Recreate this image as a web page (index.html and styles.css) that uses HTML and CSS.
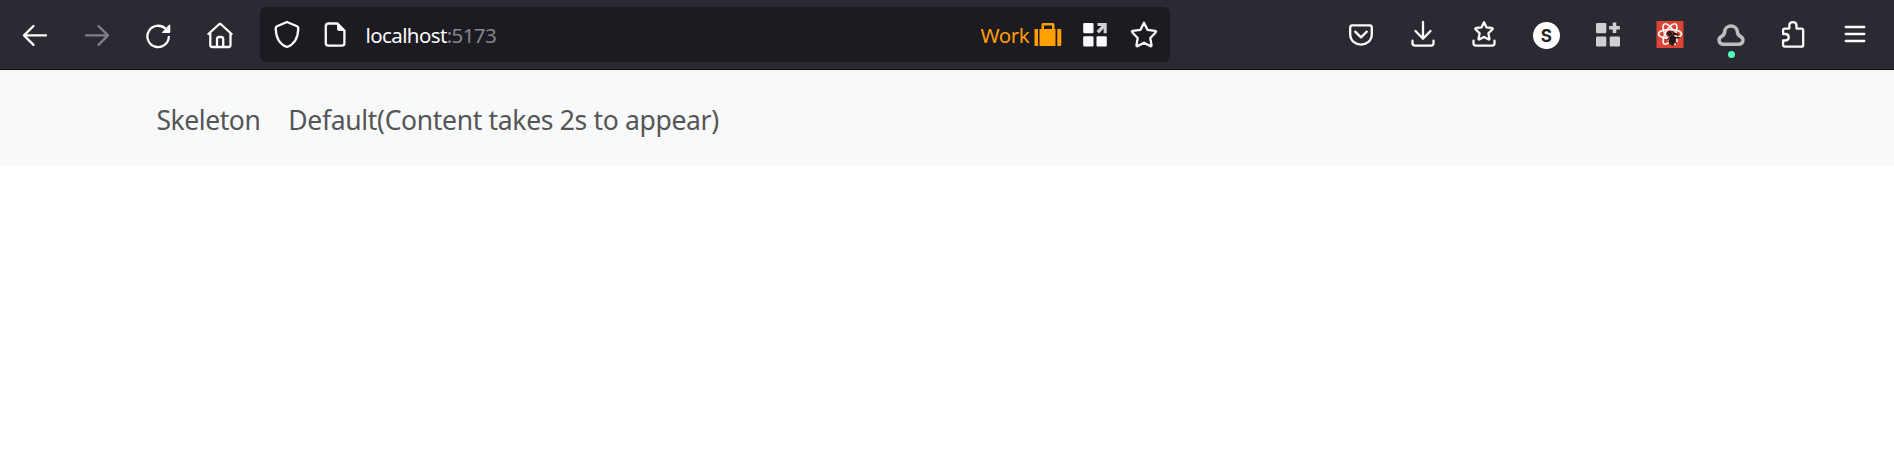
FILE: index.html
```html
<!DOCTYPE html>
<html lang="en">
<head>
<meta charset="utf-8">
<title>localhost:5173</title>
<link rel="stylesheet" href="styles.css">
</head>
<body>
<header class="toolbar">
  <div class="nav-buttons">
    <span class="tool"><svg class="icon" viewBox="-16 -16 32 32"><path d="M11 .4H-11M-1.500-9-11 .4l9.500 9.500"/></svg></span>
    <span class="tool dim"><svg class="icon" viewBox="-16 -16 32 32"><path d="M-11 .4H11M1.500-9 11 .4l-9.500 9.500"/></svg></span>
    <span class="tool"><svg class="icon" viewBox="-16 -16 32 32"><path d="M10.800 2A10.700 10.700 0 1 1 7.500-6.300"/><path class="solid" d="M12.300-9.500v6.600q0 1-1 1H4.800q-1.500 0-.5-1.100l6.600-7q1.400-1 1.400.5z"/></svg></span>
    <span class="tool"><svg class="icon" viewBox="-16 -16 32 32"><path d="M-11.600-1-1.200-10.500q1.200-1 2.400 0L11.600-1M-9.700-2V10q0 2 2 2H8.500q2 0 2-2V-2M-3 12V4q0-2 2-2H1.200q2 0 2 2v8"/></svg></span>
  </div>
  <div class="urlbar">
    <svg class="icon shield" viewBox="-16 -16 32 32"><path d="M0-13 10-8.700q1.400.7 1.300 2.200C11 2 8 9.300 0 12-8 9.300-11 2-11.300-6.500q-.1-1.500 1.300-2.200z"/></svg>
    <svg class="icon page" viewBox="-16 -16 32 32"><path d="M2.500-11.500h-9q-2.700 0-2.700 2.700V8q0 2.700 2.700 2.700H6.800Q9.400 10.700 9.400 8V-4.500z"/><path class="solid" d="M2-12v5.500Q2-4 4.500-4H10z"/></svg>
    <span class="address">localhost<span class="port">:5173</span></span>
    <span class="container-name">Work</span>
    <svg class="icon case" viewBox="-16 -16 32 32"><path class="orange" d="M-13.500-6h3.500V11h-2.500q-1 0-1-1zM-8.500-6h2v-4.500q0-1.500 1.500-1.500H5q1.500 0 1.500 1.500V-6h1V11h-16zM9.300-6H12q1.300 0 1.300 1.300V9.700Q13.300 11 12 11H9.300zM-4-9.500V-6h8v-3.500z"/></svg>
    <svg class="icon apps" viewBox="-16 -16 32 32"><g class="white"><rect x="-11.800" y="-12" width="10.300" height="10.300" rx="1.200"/><rect x="-11.800" y="1.200" width="10.300" height="10.300" rx="1.200"/><rect x="1.500" y="1.200" width="10.300" height="10.300" rx="1.200"/></g><path class="silver" d="M2.500-12h9.200v10.300H8.600V-6.500L4-1.500 1.600-4 6.500-9h-4z"/></svg>
    <svg class="icon star" viewBox="-16 -16 32 32"><path d="M0-12.300 3.500-5.200l7.600 1.100q1.700.3.500 1.600L6.300 3l1.200 7.100q.2 1.600-1.300 1L0 7.800l-6.200 3.300q-1.500.6-1.300-1L-6.300 3l-5.300-5.500q-1.200-1.300.5-1.600l7.600-1.100z"/></svg>
  </div>
  <div class="extensions">
    <span class="tool"><svg class="icon" viewBox="-16 -16 32 32"><path d="M-8.600-9.700H8.600q2.200 0 2.200 2.200V-1c0 14.200-21.600 14.200-21.600 0v-6.500q0-2.200 2.200-2.200zM-5.800-3.300 0 2.300l5.800-5.600"/></svg></span>
    <span class="tool"><svg class="icon" viewBox="-16 -16 32 32"><path d="M0-13V3.500M-7.500-4 0 3.700 7.500-4M-10.500 5.700v2.600q0 2.300 2.300 2.300H8.200q2.300 0 2.300-2.300V5.700"/></svg></span>
    <span class="tool"><svg class="icon" viewBox="-16 -16 32 32"><path d="M0-12.800 2.400-7.700 8-7q1.300.3.400 1.400l-4 3.900 1 5.200Q5.600 4.900 4.400 4.300L0 1.900l-4.400 2.400q-1.200.6-1-.8l1-5.200-4-3.900Q-9.300-6.700-8-7l5.600-.7zM-10.500 5.700v2.600q0 2.300 2.300 2.300H8.200q2.300 0 2.300-2.300V5.700"/></svg></span>
    <span class="tool"><span class="badge-s">S</span></span>
    <span class="tool"><svg class="icon" viewBox="-16 -16 32 32"><g class="silver"><rect x="-12" y="-12" width="10.300" height="10.300" rx="1.200"/><rect x="-12" y="1.500" width="10.300" height="10" rx="1.200"/><rect x="1.700" y="1.500" width="10.300" height="10" rx="1.200"/><path d="M4.700-12.500h3.600V-9h3.600v3.600H8.300v3.500H4.700v-3.500H1.100V-9h3.600z"/></g></svg></span>
    <span class="tool"><svg class="icon" viewBox="-16 -16 32 32"><rect class="red" x="-13.500" y="-14" width="27" height="27"/><g class="atom"><ellipse cy="-1" rx="11.500" ry="4.600"/><ellipse cy="-1" rx="11.500" ry="4.600" transform="rotate(60 0 -1)"/><ellipse cy="-1" rx="11.500" ry="4.600" transform="rotate(120 0 -1)"/></g><g class="bug"><circle cx="-.5" cy="-1.500" r="1.800"/><path class="wing" d="M2.500 1.500 0 6.500M4.500 3 2.500 9"/><path d="M-2.500 4.500 5-1.500M3-3.500l.5 3 4.500 0M5 3l4-.5M5 6l1.500 2.500M0 9l1-2"/></g></svg></span>
    <span class="tool cloud"><svg class="icon" viewBox="-16 -16 32 32"><path d="M-7.500 9.200H7.700C12.500 9.200 13.300 3.500 9.700 1.600 7.500.4 6.600-.5 6.400-3c-.4-8-12.400-8-12.800 0-.2 2.500-1.100 3.400-3.300 4.600C-13.300 3.500-12.500 9.200-7.500 9.200z"/></svg><span class="status"></span></span>
    <span class="tool"><svg class="icon" viewBox="-16 -16 32 32"><path d="M-9.900-1v-3.800q0-1.600 1.600-1.600h4.600v-3c0-4.600 7.200-4.600 7.200 0v3H8.400q1.800 0 1.800 1.800V9.900q0 1.800-1.800 1.800H-8.300q-1.600 0-1.600-1.600V5.500h2.100c4.700 0 4.700-6.500 0-6.500z"/></svg></span>
    <span class="tool"><svg class="icon" viewBox="-16 -16 32 32"><path d="M-9.300-8H9.300M-9.300-1H9.300M-9.300 6H9.300"/></svg></span>
  </div>
</header>
<nav class="navbar">
  <a class="link skeleton">Skeleton</a>
  <a class="link default">Default(Content takes 2s to appear)</a>
</nav>
</body>
</html>
```
FILE: styles.css
```css
body {
  margin: 0;
  background: #fff;
  font-family: "Noto Sans", "Open Sans", sans-serif;
}
.toolbar {
  display: flex;
  box-sizing: border-box;
  height: 70px;
  padding-left: 4.5px;
  background: #2b2a33;
  border-bottom: 1px solid #0c0c0d;
}
.nav-buttons, .extensions { display: flex; height: 70px; }
.nav-buttons .tool { width: 61.5px; }
.extensions { margin-left: 160.1px; }
.extensions .tool { width: 61.75px; }
.tool { display: flex; align-items: center; justify-content: center; flex: none; }
.dim { opacity: .4; }
.icon {
  display: block;
  width: 32px;
  height: 32px;
  flex: none;
  fill: none;
  stroke: #fbfbfe;
  stroke-width: 2.3;
  stroke-linecap: round;
  stroke-linejoin: round;
}
.solid, .white { fill: #fbfbfe; stroke: none; }
.orange { fill: #ff9f00; stroke: none; fill-rule: evenodd; }
.silver { fill: #d0d0d2; stroke: none; }
.red { fill: #dc4535; stroke: none; }
.atom { stroke: #fff; stroke-width: 1.5; }
.bug { fill: #231815; stroke: #231815; stroke-width: 1.3; }
.wing { stroke-width: 3.2; }
.urlbar {
  display: flex;
  align-items: center;
  box-sizing: border-box;
  width: 910px;
  height: 55px;
  margin: 7px 0 0 9.5px;
  padding-left: 10.5px;
  border-radius: 6px;
  background: #1c1b22;
  font-size: 20.5px;
  line-height: 28px;
  color: #fbfbfe;
}
.page { margin-left: 16px; }
.address { width: 615px; margin-left: 15px; letter-spacing: -.6px; white-space: nowrap; }
.port { color: #87868c; }
.container-name { width: 51px; color: #ff9f00; letter-spacing: -.4px; }
.apps { margin-left: 15.5px; }
.star { margin-left: 16.5px; }
.badge-s {
  width: 27px;
  height: 27px;
  border-radius: 50%;
  background: #fff;
  color: #222;
  font: bold 17px/28px Inter, sans-serif;
  text-align: center;
}
.cloud { position: relative; }
.cloud .icon { stroke: #bdbcc1; stroke-width: 3.5; }
.status {
  position: absolute;
  left: 27.5px;
  top: 51px;
  width: 7px;
  height: 7px;
  border-radius: 50%;
  background: #54ffbd;
}
.navbar {
  display: flex;
  gap: 28px;
  box-sizing: border-box;
  height: 96px;
  padding: 31px 0 0 156.5px;
  background: #f8f9fa;
}
.link { font-size: 26.5px; line-height: 38px; color: #555; white-space: nowrap; }
.skeleton { letter-spacing: -.45px; }
.default { letter-spacing: -.33px; }
```
